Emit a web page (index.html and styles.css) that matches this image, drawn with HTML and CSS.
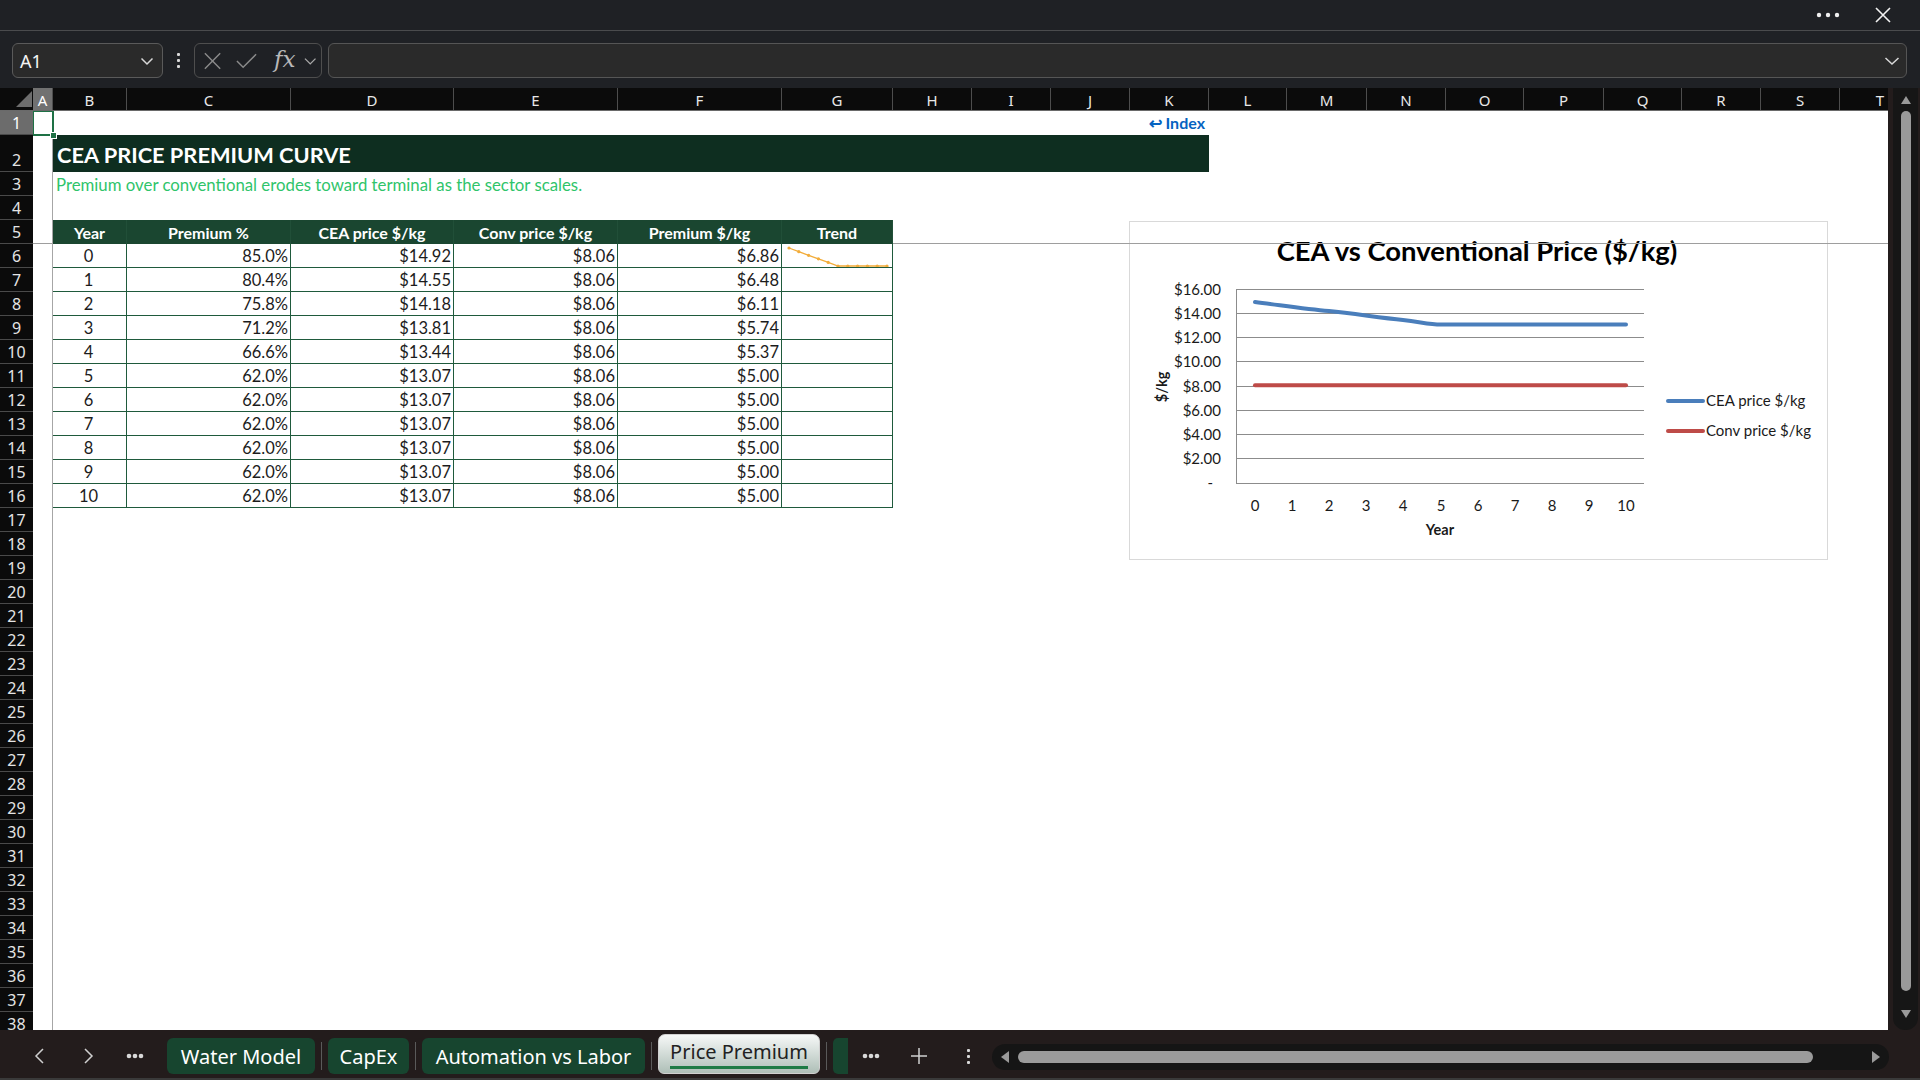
FILE: index.html
```html
<!DOCTYPE html>
<html lang="en">
<head>
    <meta charset="UTF-8">
    <title>Price Premium</title>
    <link rel="stylesheet" href="styles.css">
</head>
<body>
<div class="app">
    <!-- barra superior -->
    <div class="titlebar">
        <svg class="title-dots" width="24" height="6" viewBox="0 0 24 6"><circle cx="3" cy="3" r="2.2" fill="#f0f0f0"/><circle cx="12" cy="3" r="2.2" fill="#f0f0f0"/><circle cx="21" cy="3" r="2.2" fill="#f0f0f0"/></svg>
        <svg class="title-close" width="18" height="18" viewBox="0 0 18 18"><path d="M2 2L16 16M16 2L2 16" stroke="#f2f2f2" stroke-width="1.6" fill="none"/></svg>
    </div>

    <!-- barra de formulas -->
    <div class="formula-bar">
        <div class="namebox">
            <span>A1</span>
            <svg width="14" height="10" viewBox="0 0 14 10"><path d="M1.5 2.5L7 8L12.5 2.5" stroke="#d8d8d8" stroke-width="1.5" fill="none"/></svg>
        </div>
        <div class="vdots"><i></i><i></i><i></i></div>
        <div class="fx-group">
            <svg width="22" height="22" viewBox="0 0 22 22"><path d="M3 3L19 19M19 3L3 19" stroke="#8a8a8a" stroke-width="1.5" fill="none"/></svg>
            <svg width="24" height="22" viewBox="0 0 24 22"><path d="M2 11L8.5 17.5L22 4" stroke="#8a8a8a" stroke-width="1.5" fill="none"/></svg>
            <span class="fx">fx</span>
            <svg width="13" height="10" viewBox="0 0 13 10"><path d="M1 2.5L6.5 8L12 2.5" stroke="#a8a8a8" stroke-width="1.4" fill="none"/></svg>
        </div>
        <div class="formula-input">
            <svg width="16" height="10" viewBox="0 0 16 10"><path d="M1.5 2L8 8L14.5 2" stroke="#d8d8d8" stroke-width="1.5" fill="none"/></svg>
        </div>
    </div>

    <!-- hoja -->
    <div class="sheet">
        <div class="corner"><svg width="16" height="16" viewBox="0 0 16 16"><path d="M16 0L16 16L0 16Z" fill="#6d6d6d"/></svg></div>
        <div class="col-heads">
            <div class="ch sel w-a">A</div>
            <div class="ch w-b">B</div>
            <div class="ch w-c">C</div>
            <div class="ch w-d">D</div>
            <div class="ch w-e">E</div>
            <div class="ch w-f">F</div>
            <div class="ch w-g">G</div>
            <div class="ch w-n">H</div>
            <div class="ch w-n">I</div>
            <div class="ch w-n">J</div>
            <div class="ch w-n">K</div>
            <div class="ch w-l">L</div>
            <div class="ch w-m">M</div>
            <div class="ch w-n">N</div>
            <div class="ch w-l">O</div>
            <div class="ch w-m">P</div>
            <div class="ch w-l">Q</div>
            <div class="ch w-n">R</div>
            <div class="ch w-n">S</div>
            <div class="ch w-t">T</div>
        </div>
        <div class="vscroll">
            <div class="vtrack">
                <svg class="arrow" width="12" height="10" viewBox="0 0 12 10"><path d="M6 1L11 9L1 9Z" fill="#9a9a9a"/></svg>
                <div class="vthumb"></div>
                <svg class="arrow" width="12" height="10" viewBox="0 0 12 10"><path d="M1 1L11 1L6 9Z" fill="#9a9a9a"/></svg>
            </div>
        </div>
        <div class="row-heads">
            <div class="rh sel">1</div>
            <div class="rh tall">2</div>
            <div class="rh">3</div>
            <div class="rh">4</div>
            <div class="rh">5</div>
            <div class="rh">6</div>
            <div class="rh">7</div>
            <div class="rh">8</div>
            <div class="rh">9</div>
            <div class="rh">10</div>
            <div class="rh">11</div>
            <div class="rh">12</div>
            <div class="rh">13</div>
            <div class="rh">14</div>
            <div class="rh">15</div>
            <div class="rh">16</div>
            <div class="rh">17</div>
            <div class="rh">18</div>
            <div class="rh">19</div>
            <div class="rh">20</div>
            <div class="rh">21</div>
            <div class="rh">22</div>
            <div class="rh">23</div>
            <div class="rh">24</div>
            <div class="rh">25</div>
            <div class="rh">26</div>
            <div class="rh">27</div>
            <div class="rh">28</div>
            <div class="rh">29</div>
            <div class="rh">30</div>
            <div class="rh">31</div>
            <div class="rh">32</div>
            <div class="rh">33</div>
            <div class="rh">34</div>
            <div class="rh">35</div>
            <div class="rh">36</div>
            <div class="rh">37</div>
            <div class="rh">38</div>
        </div>

        <div class="cells">
            <div class="sheet-row r1">
                <a class="index-link">&#8617; Index</a>
            </div>
            <div class="sheet-row title-band">CEA PRICE PREMIUM CURVE</div>
            <div class="sheet-row subtitle">Premium over conventional erodes toward terminal as the sector scales.</div>
            <div class="sheet-row r4"></div>

            <div class="tbl">
                <div class="th">Year</div><div class="th">Premium %</div><div class="th">CEA price $/kg</div><div class="th">Conv price $/kg</div><div class="th">Premium $/kg</div><div class="th">Trend</div>

                <div class="td c">0</div><div class="td">85.0%</div><div class="td">$14.92</div><div class="td">$8.06</div><div class="td">$6.86</div>
                <div class="td spark">
                    <svg width="110" height="23" viewBox="0 0 110 23">
                        <polyline points="7,4 16.8,7.7 26.6,11.3 36.4,14.8 46.2,18.4 56,22 65.8,22 75.6,22 85.4,22 95.2,22 105,22" fill="none" stroke="#f2ac3a" stroke-width="1.3"/>
                        <g fill="#f2ac3a">
                            <circle cx="7" cy="4" r="1.6"/><circle cx="16.8" cy="7.7" r="1.6"/><circle cx="26.6" cy="11.3" r="1.6"/><circle cx="36.4" cy="14.8" r="1.6"/><circle cx="46.2" cy="18.4" r="1.6"/><circle cx="56" cy="22" r="1.6"/><circle cx="65.8" cy="22" r="1.6"/><circle cx="75.6" cy="22" r="1.6"/><circle cx="85.4" cy="22" r="1.6"/><circle cx="95.2" cy="22" r="1.6"/><circle cx="105" cy="22" r="1.6"/>
                        </g>
                    </svg>
                </div>

                <div class="td c">1</div><div class="td">80.4%</div><div class="td">$14.55</div><div class="td">$8.06</div><div class="td">$6.48</div><div class="td"></div>
                <div class="td c">2</div><div class="td">75.8%</div><div class="td">$14.18</div><div class="td">$8.06</div><div class="td">$6.11</div><div class="td"></div>
                <div class="td c">3</div><div class="td">71.2%</div><div class="td">$13.81</div><div class="td">$8.06</div><div class="td">$5.74</div><div class="td"></div>
                <div class="td c">4</div><div class="td">66.6%</div><div class="td">$13.44</div><div class="td">$8.06</div><div class="td">$5.37</div><div class="td"></div>
                <div class="td c">5</div><div class="td">62.0%</div><div class="td">$13.07</div><div class="td">$8.06</div><div class="td">$5.00</div><div class="td"></div>
                <div class="td c">6</div><div class="td">62.0%</div><div class="td">$13.07</div><div class="td">$8.06</div><div class="td">$5.00</div><div class="td"></div>
                <div class="td c">7</div><div class="td">62.0%</div><div class="td">$13.07</div><div class="td">$8.06</div><div class="td">$5.00</div><div class="td"></div>
                <div class="td c">8</div><div class="td">62.0%</div><div class="td">$13.07</div><div class="td">$8.06</div><div class="td">$5.00</div><div class="td"></div>
                <div class="td c">9</div><div class="td">62.0%</div><div class="td">$13.07</div><div class="td">$8.06</div><div class="td">$5.00</div><div class="td"></div>
                <div class="td c">10</div><div class="td">62.0%</div><div class="td">$13.07</div><div class="td">$8.06</div><div class="td">$5.00</div><div class="td"></div>
            </div>

            <!-- lineas de inmovilizar paneles -->
            <div class="freeze-h"></div>
            <div class="freeze-v"></div>

            <!-- celda activa -->
            <div class="active-cell"><span class="fill-handle"></span></div>

            <!-- grafico -->
            <div class="chart">
                <svg width="699" height="339" viewBox="0 0 699 339">
                    <text class="chart-title" x="348" y="40" text-anchor="middle">CEA vs Conventional Price ($/kg)</text>

                    <g stroke="#8c8c8c" stroke-width="1">
                        <line x1="107" y1="68.5" x2="515" y2="68.5"/>
                        <line x1="107" y1="92.5" x2="515" y2="92.5"/>
                        <line x1="107" y1="116.5" x2="515" y2="116.5"/>
                        <line x1="107" y1="140.5" x2="515" y2="140.5"/>
                        <line x1="107" y1="165.5" x2="515" y2="165.5"/>
                        <line x1="107" y1="189.5" x2="515" y2="189.5"/>
                        <line x1="107" y1="213.5" x2="515" y2="213.5"/>
                        <line x1="107" y1="237.5" x2="515" y2="237.5"/>
                        <line x1="107" y1="262.5" x2="515" y2="262.5"/>
                        <line x1="107.5" y1="68" x2="107.5" y2="262"/>
                    </g>

                    <g class="axis-label" text-anchor="end">
                        <text x="92" y="74">$16.00</text>
                        <text x="92" y="98">$14.00</text>
                        <text x="92" y="122">$12.00</text>
                        <text x="92" y="146">$10.00</text>
                        <text x="92" y="171">$8.00</text>
                        <text x="92" y="195">$6.00</text>
                        <text x="92" y="219">$4.00</text>
                        <text x="92" y="243">$2.00</text>
                        <text x="84" y="267">-</text>
                    </g>

                    <g class="axis-label" text-anchor="middle">
                        <text x="126" y="290">0</text>
                        <text x="163" y="290">1</text>
                        <text x="200" y="290">2</text>
                        <text x="237" y="290">3</text>
                        <text x="274" y="290">4</text>
                        <text x="312" y="290">5</text>
                        <text x="349" y="290">6</text>
                        <text x="386" y="290">7</text>
                        <text x="423" y="290">8</text>
                        <text x="460" y="290">9</text>
                        <text x="497" y="290">10</text>
                    </g>

                    <text class="axis-title" x="311" y="314" text-anchor="middle">Year</text>
                    <text class="axis-title" transform="translate(38 166) rotate(-90)" text-anchor="middle">$/kg</text>

                    <path d="M126 81.1 C150 84 176 88 200 90.1 C224 92.5 250 96.5 274 99 C292 101 300 103.5 312 103.5 L497 103.5" fill="none" stroke="#4a7ebb" stroke-width="4" stroke-linecap="round"/>
                    <line x1="126" y1="164.3" x2="497" y2="164.3" stroke="#be4b48" stroke-width="4" stroke-linecap="round"/>

                    <line x1="539" y1="180" x2="574" y2="180" stroke="#4a7ebb" stroke-width="4" stroke-linecap="round"/>
                    <text class="legend" x="577" y="185">CEA price $/kg</text>
                    <line x1="539" y1="210" x2="574" y2="210" stroke="#be4b48" stroke-width="4" stroke-linecap="round"/>
                    <text class="legend" x="577" y="215">Conv price $/kg</text>
                </svg>
            </div>
        </div>
    </div>

    <!-- pestañas -->
    <div class="tabbar">
        <div class="tab-btn first">
            <svg width="12" height="18" viewBox="0 0 12 18"><path d="M9 2L2 9L9 16" stroke="#cfcfcf" stroke-width="1.5" fill="none"/></svg>
        </div>
        <div class="tab-btn">
            <svg width="12" height="18" viewBox="0 0 12 18"><path d="M3 2L10 9L3 16" stroke="#cfcfcf" stroke-width="1.5" fill="none"/></svg>
        </div>
        <div class="tab-btn dots lead">
            <svg width="18" height="6" viewBox="0 0 18 6"><circle cx="3" cy="3" r="2.3" fill="#d8d8d8"/><circle cx="9" cy="3" r="2.3" fill="#d8d8d8"/><circle cx="15" cy="3" r="2.3" fill="#d8d8d8"/></svg>
        </div>
        <div class="tab w-water">Water Model</div>
        <span class="tab-sep"></span>
        <div class="tab w-capex">CapEx</div>
        <span class="tab-sep"></span>
        <div class="tab w-auto">Automation vs Labor</div>
        <span class="tab-sep"></span>
        <div class="tab active"><span>Price Premium</span></div>
        <span class="tab-sep"></span>
        <div class="tab partial"></div>
        <div class="tab-btn dots">
            <svg width="18" height="6" viewBox="0 0 18 6"><circle cx="3" cy="3" r="2.3" fill="#d8d8d8"/><circle cx="9" cy="3" r="2.3" fill="#d8d8d8"/><circle cx="15" cy="3" r="2.3" fill="#d8d8d8"/></svg>
        </div>
        <div class="tab-btn plus">
            <svg width="18" height="18" viewBox="0 0 18 18"><path d="M9 1V17M1 9H17" stroke="#d0d0d0" stroke-width="1.5"/></svg>
        </div>
        <div class="tab-btn"><div class="vdots small"><i></i><i></i><i></i></div></div>
        <div class="hscroll">
            <svg width="10" height="12" viewBox="0 0 10 12"><path d="M9 0L9 12L1 6Z" fill="#9a9a9a"/></svg>
            <div class="hthumb"></div>
            <svg width="10" height="12" viewBox="0 0 10 12"><path d="M1 0L1 12L9 6Z" fill="#9a9a9a"/></svg>
        </div>
    </div>
</div>
</body>
</html>
```

FILE: styles.css
```css
* {
    box-sizing: border-box;
}

body {
    margin: 0;
    background: #1f2226;
    font-family: "Noto Sans", "Open Sans", sans-serif;
    overflow: hidden;
}

.app {
    width: 1920px;
    height: 1080px;
    display: flex;
    flex-direction: column;
}

/* barra superior */
.titlebar {
    height: 31px;
    border-bottom: 1px solid #4a4b4d;
    display: flex;
    align-items: center;
    justify-content: flex-end;
    padding-right: 28px;
    gap: 34px;
    background: #1f2125;
}

/* barra de formulas */
.formula-bar {
    height: 57px;
    background: #1f2125;
    display: flex;
    align-items: flex-start;
    padding: 12px 0 0 12px;
}

.namebox {
    width: 151px;
    height: 35px;
    border: 1px solid #5a5a5a;
    border-radius: 6px;
    background: #2a2a2a;
    display: flex;
    align-items: center;
    justify-content: space-between;
    padding: 0 8px 0 7px;
    color: #f5f5f5;
    font-size: 18px;
}

.vdots {
    width: 31px;
    height: 35px;
    display: flex;
    flex-direction: column;
    align-items: center;
    justify-content: center;
    gap: 3px;
}

.vdots i {
    width: 3px;
    height: 3px;
    background: #d8d8d8;
    border-radius: 1px;
}

.fx-group {
    width: 128px;
    height: 35px;
    border: 1px solid #4e4e4e;
    border-radius: 6px;
    display: flex;
    align-items: center;
    padding: 0 5px 0 7px;
    gap: 12px;
}

.fx {
    font-family: "DejaVu Serif", "Liberation Serif", serif;
    font-style: italic;
    color: #b8b8b8;
    font-size: 23px;
    line-height: 1;
    margin: 0 -4px 3px 4px;
}

.formula-input {
    width: 1579px;
    height: 35px;
    margin-left: 6px;
    border: 1px solid #555;
    border-radius: 6px;
    background: #2a2a2a;
    display: flex;
    align-items: center;
    justify-content: flex-end;
    padding-right: 6px;
}

/* hoja */
.sheet {
    height: 942px;
    display: grid;
    grid-template-columns: 33px 1855px 32px;
    grid-template-rows: 23px 919px;
    background: #231c1c;
}

.corner {
    background: #0b0b0b;
    display: flex;
    align-items: flex-end;
    justify-content: flex-end;
    padding: 0 1px 3px 0;
    border-bottom: 1px solid #6a6a6a;
}

.col-heads {
    display: flex;
    background: #0b0b0b;
    border-bottom: 1px solid #6a6a6a;
}

.ch {
    flex: none;
    border-right: 1px solid #4d4d4d;
    color: #e8e8e8;
    font-size: 15px;
    display: flex;
    align-items: center;
    justify-content: center;
    padding-top: 1px;
}

.ch.sel {
    background: #717171;
    color: #ffffff;
}

.w-a { width: 20px; }
.w-b { width: 74px; }
.w-c { width: 164px; }
.w-d { width: 163px; }
.w-e { width: 164px; }
.w-f { width: 164px; }
.w-g { width: 111px; }
.w-n { width: 79px; }
.w-l { width: 78px; }
.w-m { width: 80px; }
.w-t { width: 48px; border-right: none; justify-content: flex-end; padding-right: 4px; }

.vscroll {
    grid-row: 1 / 3;
    grid-column: 3;
    padding: 0 2px 0 5px;
}

.vtrack {
    height: 942px;
    background: #161616;
    border-radius: 0 0 12px 12px;
    display: flex;
    flex-direction: column;
    align-items: center;
    padding-top: 7px;
}

.vthumb {
    width: 10px;
    height: 880px;
    background: #9a9a9a;
    border-radius: 5px;
    margin: 6px 0 18px;
}

.row-heads {
    background: #0b0b0b;
    overflow: hidden;
}

.rh {
    height: 24px;
    border-bottom: 1px solid #4a4a4a;
    color: #e4e4e4;
    font-size: 16px;
    display: flex;
    align-items: flex-end;
    justify-content: center;
    line-height: 22px;
}

.rh.tall {
    height: 37px;
}

.rh.sel {
    background: #6c6c6c;
    color: #ffffff;
}

/* celdas */
.cells {
    position: relative;
    background: #ffffff;
    overflow: hidden;
    font-family: Lato, "Liberation Sans", sans-serif;
}

.sheet-row {
    margin-left: 20px;
    width: 1156px;
    height: 24px;
}

.r1 {
    display: flex;
    align-items: center;
    justify-content: flex-end;
    padding-right: 4px;
}

.index-link {
    color: #0563c1;
    font-weight: bold;
    font-size: 16px;
}

.title-band {
    height: 37px;
    background: #0e2e20;
    color: #ffffff;
    font-weight: bold;
    font-size: 21.8px;
    display: flex;
    align-items: center;
    padding: 2px 0 0 4px;
}

.subtitle {
    color: #2fc46a;
    font-size: 16.8px;
    display: flex;
    align-items: center;
    padding-left: 3px;
}

.tbl {
    position: relative;
    z-index: 2;
    margin-left: 20px;
    display: grid;
    grid-template-columns: 74px 164px 163px 164px 164px 111px;
    grid-auto-rows: 24px;
    width: 840px;
}

.th {
    background: #1a4630;
    color: #ffffff;
    font-weight: bold;
    font-size: 16px;
    border-right: 1px solid #214f38;
    display: flex;
    align-items: center;
    justify-content: center;
    padding-top: 1px;
}

.td {
    border-right: 1px solid #1f5a3c;
    border-bottom: 1px solid #1f5a3c;
    color: #1c1c1c;
    font-size: 16.5px;
    display: flex;
    align-items: center;
    justify-content: flex-end;
    padding: 1px 2px 0 0;
}

.td.c {
    justify-content: center;
}

.td.spark {
    padding: 0;
    align-items: flex-start;
    justify-content: flex-start;
}

.freeze-h {
    position: absolute;
    left: 0;
    right: 0;
    top: 132px;
    height: 1px;
    background: #9e9e9e;
    z-index: 1;
}

.freeze-v {
    position: absolute;
    left: 19px;
    top: 0;
    bottom: 0;
    width: 1px;
    background: #a6a6a6;
    z-index: 3;
}

.active-cell {
    position: absolute;
    left: -1px;
    top: -1px;
    width: 22px;
    height: 26px;
    border: 2px solid #1e7145;
    z-index: 4;
}

.fill-handle {
    position: absolute;
    right: -5px;
    bottom: -5px;
    width: 7px;
    height: 7px;
    background: #1e7145;
    border: 1px solid #ffffff;
}

.chart {
    position: absolute;
    left: 1096px;
    top: 110px;
    width: 699px;
    height: 339px;
    border: 1px solid #d9d9d9;
    background: #ffffff;
    z-index: 0;
}

.chart svg {
    display: block;
    margin: -1px;
}

.chart-title {
    font-family: Lato, "Liberation Sans", sans-serif;
    font-weight: bold;
    font-size: 27.4px;
    fill: #000000;
}

.axis-label {
    font-family: Lato, "Liberation Sans", sans-serif;
    font-size: 15px;
    fill: #1a1a1a;
}

.axis-title {
    font-family: Lato, "Liberation Sans", sans-serif;
    font-weight: bold;
    font-size: 14.5px;
    fill: #1a1a1a;
}

.legend {
    font-family: Lato, "Liberation Sans", sans-serif;
    font-size: 15px;
    fill: #1a1a1a;
}

/* pestañas */
.tabbar {
    height: 50px;
    background: #231c1c;
    border-bottom: 2px solid #3a3a3a;
    display: flex;
    align-items: center;
    padding-top: 4px;
}

.tab-btn {
    width: 48px;
    height: 36px;
    flex: none;
    display: flex;
    align-items: center;
    justify-content: center;
}

.tab-btn.first {
    margin-left: 15px;
    width: 49px;
}

.tab-btn.dots {
    width: 46px;
}

.tab-btn.lead {
    margin-right: 9px;
}

.tab-btn.plus {
    width: 50px;
}

.tab {
    height: 36px;
    flex: none;
    background: #17452f;
    color: #ffffff;
    font-size: 20px;
    border-radius: 6px;
    display: flex;
    align-items: center;
    justify-content: center;
}

.w-water { width: 148px; }
.w-capex { width: 81px; }
.w-auto { width: 223px; }

.tab-sep {
    flex: none;
    width: 1px;
    height: 28px;
    background: #5a5a5a;
    margin: 0 6px;
}

.tab.active {
    width: 162px;
    height: 40px;
    margin-top: -4px;
    background: linear-gradient(#f6f8f7, #aebfb7);
    border: 1px solid #d0d0d0;
    border-radius: 7px 7px 6px 6px;
    color: #222222;
    align-items: flex-start;
}

.tab.active span {
    margin-top: 2px;
    border-bottom: 3px solid #1e7b45;
    line-height: 29px;
}

.tab.partial {
    width: 15px;
    border-radius: 5px 0 0 5px;
}

.vdots.small {
    width: 46px;
}

.hscroll {
    flex: none;
    width: 897px;
    height: 26px;
    background: #151515;
    border-radius: 13px;
    display: flex;
    align-items: center;
    padding: 0 8px;
    margin-top: 2px;
}

.hthumb {
    width: 795px;
    height: 12px;
    background: #9b9b9b;
    border-radius: 6px;
    margin: 0 auto 0 8px;
}
```
